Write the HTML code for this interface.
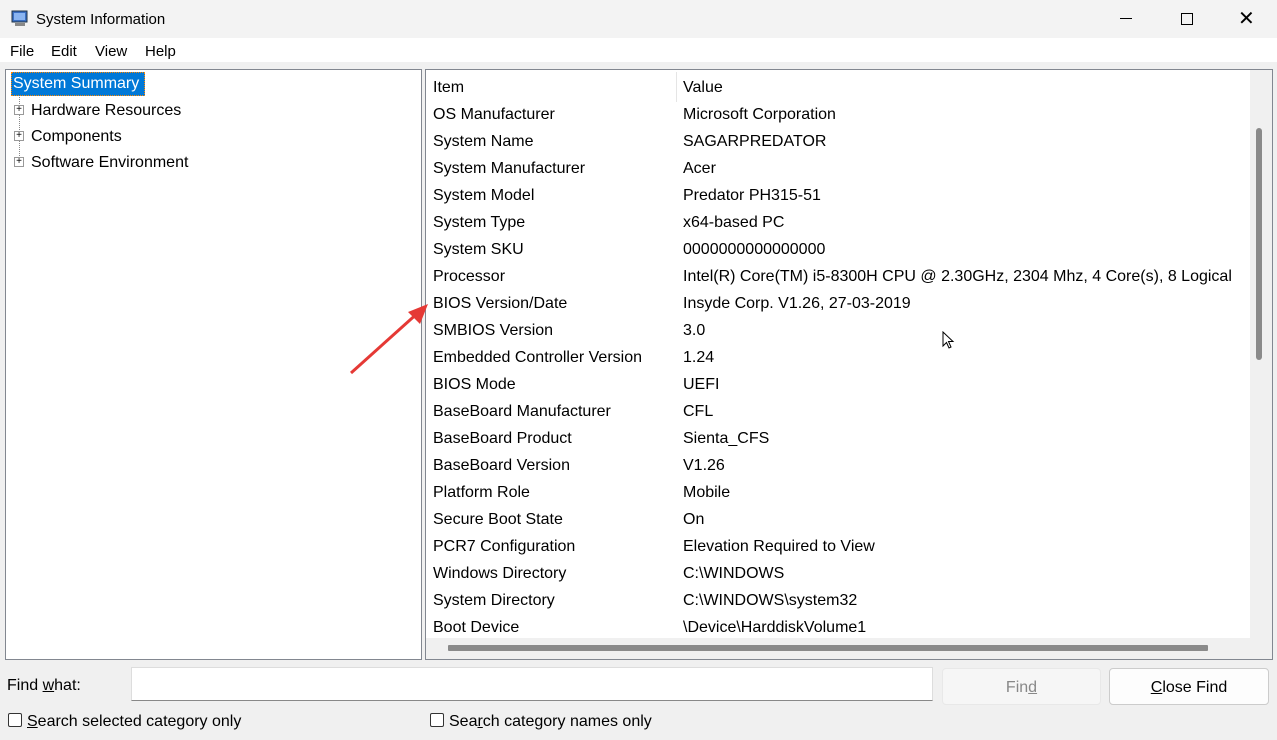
<!DOCTYPE html><html><head><style>
*{margin:0;padding:0;box-sizing:border-box}
body{width:1277px;height:740px;background:#f0f0f0;font-family:"Liberation Sans",sans-serif;font-size:16px;color:#000;position:relative;overflow:hidden}
.a{position:absolute;white-space:nowrap}
</style></head><body>
<div class="a" style="left:0;top:0;width:1277px;height:38px;background:#f3f3f3"></div>
<svg class="a" style="left:11px;top:9px" width="18" height="18"><rect x="1" y="2" width="15" height="11" fill="#3a6fc4" stroke="#234" stroke-width="1"/><rect x="3" y="4" width="11" height="7" fill="#8ab4f0"/><rect x="4" y="14" width="10" height="3" fill="#888"/></svg>
<div class="a" style="left:36px;top:11px;font-size:15px">System Information</div>
<div class="a" style="left:1120px;top:18px;width:12px;height:1px;background:#000"></div>
<div class="a" style="left:1181px;top:13px;width:12px;height:12px;border:1px solid #000"></div>
<div class="a" style="left:1238px;top:6px;font-size:20px;font-weight:300">✕</div>
<div class="a" style="left:0;top:38px;width:1277px;height:24px;background:#fff"></div>
<div class="a" style="left:10px;top:43px;font-size:15px">File</div>
<div class="a" style="left:51px;top:43px;font-size:15px">Edit</div>
<div class="a" style="left:95px;top:43px;font-size:15px">View</div>
<div class="a" style="left:145px;top:43px;font-size:15px">Help</div>
<div class="a" style="left:5px;top:69px;width:417px;height:591px;background:#fff;border:1px solid #828790"></div>
<div class="a" style="left:11px;top:72px;width:134px;height:24px;background:#0078d7;border:1px dotted #f80"></div>
<div class="a" style="left:13px;top:75px;color:#fff">System Summary</div>
<div class="a" style="left:19px;top:97px;height:65px;border-left:1px dotted #888"></div>
<div class="a" style="left:31px;top:102px">Hardware Resources</div>
<div class="a" style="left:31px;top:128px">Components</div>
<div class="a" style="left:31px;top:154px">Software Environment</div>
<div class="a" style="left:14px;top:105px;width:10px;height:10px;border:1px solid #999;background:#fff;font-size:10px;line-height:8px;text-align:center">+</div>
<div class="a" style="left:14px;top:131px;width:10px;height:10px;border:1px solid #999;background:#fff;font-size:10px;line-height:8px;text-align:center">+</div>
<div class="a" style="left:14px;top:157px;width:10px;height:10px;border:1px solid #999;background:#fff;font-size:10px;line-height:8px;text-align:center">+</div>
<div class="a" style="left:425px;top:69px;width:848px;height:591px;background:#f0f0f0;border:1px solid #828790"></div>
<div class="a" style="left:426px;top:70px;width:824px;height:568px;background:#fff"></div>
<div class="a" style="left:676px;top:72px;width:1px;height:30px;background:#e5e5e5"></div>
<div class="a" style="left:1256px;top:128px;width:6px;height:232px;background:#8a8a8a;border-radius:3px"></div>
<div class="a" style="left:448px;top:645px;width:760px;height:6px;background:#8a8a8a;border-radius:1px"></div>
<div class="a" style="left:433px;top:74px;line-height:27px">Item<br>OS Manufacturer<br>System Name<br>System Manufacturer<br>System Model<br>System Type<br>System SKU<br>Processor<br>BIOS Version/Date<br>SMBIOS Version<br>Embedded Controller Version<br>BIOS Mode<br>BaseBoard Manufacturer<br>BaseBoard Product<br>BaseBoard Version<br>Platform Role<br>Secure Boot State<br>PCR7 Configuration<br>Windows Directory<br>System Directory<br>Boot Device</div>
<div class="a" style="left:683px;top:74px;line-height:27px;width:565px;overflow:hidden">Value<br>Microsoft Corporation<br>SAGARPREDATOR<br>Acer<br>Predator PH315-51<br>x64-based PC<br>0000000000000000<br>Intel(R) Core(TM) i5-8300H CPU @ 2.30GHz, 2304 Mhz, 4 Core(s), 8 Logical<br>Insyde Corp. V1.26, 27-03-2019<br>3.0<br>1.24<br>UEFI<br>CFL<br>Sienta_CFS<br>V1.26<br>Mobile<br>On<br>Elevation Required to View<br>C:\WINDOWS<br>C:\WINDOWS\system32<br>\Device\HarddiskVolume1</div>
<div class="a" style="left:426px;top:638px;width:846px;height:21px;background:#f0f0f0"></div>
<div class="a" style="left:448px;top:645px;width:760px;height:6px;background:#8a8a8a;border-radius:1px"></div>
<svg class="a" style="left:340px;top:295px" width="100" height="90"><line x1="11" y1="78" x2="80" y2="16" stroke="#e53935" stroke-width="3"/><polygon points="88,9 68,17 80,29" fill="#e53935"/></svg>
<svg class="a" style="left:942px;top:331px" width="14" height="20"><path d="M1 1 L1 15 L4.5 11.5 L7 17 L9 16 L6.5 10.5 L11 10.5 Z" fill="#fff" stroke="#000"/></svg>
<div class="a" style="left:7px;top:677px">Find <u>w</u>hat:</div>
<div class="a" style="left:131px;top:667px;width:802px;height:34px;background:#fff;border:1px solid #ddd;border-bottom-color:#888"></div>
<div class="a" style="left:942px;top:668px;width:159px;height:37px;background:#f6f6f6;border:1px solid #e8e8e8;border-radius:4px;color:#888;text-align:center;line-height:37px">Fin<u>d</u></div>
<div class="a" style="left:1109px;top:668px;width:160px;height:37px;background:#fdfdfd;border:1px solid #ccc;border-radius:4px;text-align:center;line-height:37px"><u>C</u>lose Find</div>
<div class="a" style="left:8px;top:713px;width:14px;height:14px;border:1px solid #333;border-radius:2px;background:#fff"></div>
<div class="a" style="left:27px;top:713px"><u>S</u>earch selected category only</div>
<div class="a" style="left:430px;top:713px;width:14px;height:14px;border:1px solid #333;border-radius:2px;background:#fff"></div>
<div class="a" style="left:449px;top:713px">Sea<u>r</u>ch category names only</div>
</body></html>
